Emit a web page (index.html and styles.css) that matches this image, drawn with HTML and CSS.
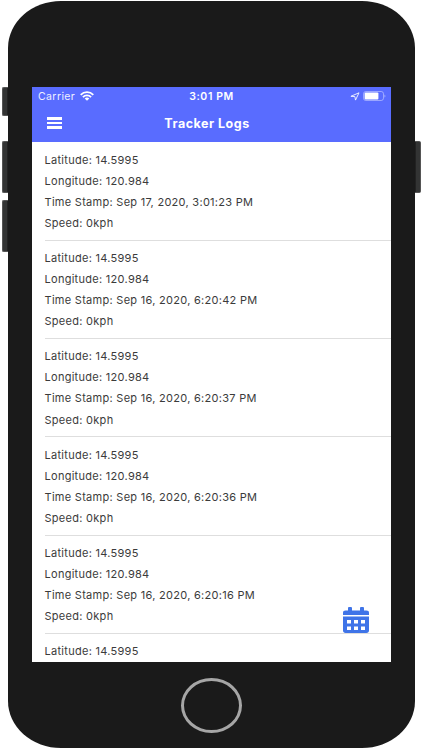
FILE: index.html
```html
<!DOCTYPE html>
<html lang="en">
<head>
    <meta charset="UTF-8">
    <meta name="viewport" content="width=device-width, initial-scale=1.0">
    <title>Tracker Logs</title>
    <link rel="stylesheet" href="styles.css">
</head>
<body>

    <div class="device">
        <div class="side side-left">
            <span class="key key-mute"></span>
            <span class="key"></span>
            <span class="key key-down"></span>
        </div>

        <div class="phone">
            <div class="screen">
                <header>
                    <div class="status-bar">
                        <div class="status-left">
                            <span class="carrier">Carrier</span>
                            <svg class="wifi" viewBox="0 0 14 10" fill="none" stroke="#fff" stroke-width="1.8">
                                <path d="M0.7 3.9C4.2 0.3 9.8 0.3 13.3 3.9"/>
                                <path d="M2.9 6.1C5.2 3.8 8.8 3.8 11.1 6.1"/>
                                <path d="M7 9.7L4.7 7.5C6 6.3 8 6.3 9.3 7.5Z" fill="#fff" stroke="none"/>
                            </svg>
                        </div>
                        <span class="clock">3:01 PM</span>
                        <div class="status-right">
                            <svg class="arrow" viewBox="0 0 10 9" fill="none" stroke="#fff" stroke-opacity="0.85" stroke-width="1" stroke-linejoin="round">
                                <path d="M9 0.8L0.9 4.3L4.9 4.6L5.5 8.1Z"/>
                            </svg>
                            <svg class="battery" viewBox="0 0 23 10">
                                <rect x="0.5" y="0.5" width="20" height="9" rx="2.3" fill="none" stroke="#fff" stroke-opacity="0.4"/>
                                <rect x="1.6" y="1.6" width="13.8" height="6.8" rx="1" fill="#fff"/>
                                <path d="M21.5 3.4C22.7 4 22.7 6 21.5 6.6Z" fill="#fff" fill-opacity="0.5"/>
                            </svg>
                        </div>
                    </div>
                    <div class="toolbar">
                        <button class="menu" aria-label="Menu">
                            <span></span>
                            <span></span>
                            <span></span>
                        </button>
                        <h1>Tracker Logs</h1>
                    </div>
                </header>

                <main>
                    <div class="log">
                        <p>Latitude: 14.5995</p>
                        <p>Longitude: 120.984</p>
                        <p>Time Stamp: Sep 17, 2020, 3:01:23 PM</p>
                        <p>Speed: 0kph</p>
                    </div>
                    <div class="log">
                        <p>Latitude: 14.5995</p>
                        <p>Longitude: 120.984</p>
                        <p>Time Stamp: Sep 16, 2020, 6:20:42 PM</p>
                        <p>Speed: 0kph</p>
                    </div>
                    <div class="log">
                        <p>Latitude: 14.5995</p>
                        <p>Longitude: 120.984</p>
                        <p>Time Stamp: Sep 16, 2020, 6:20:37 PM</p>
                        <p>Speed: 0kph</p>
                    </div>
                    <div class="log">
                        <p>Latitude: 14.5995</p>
                        <p>Longitude: 120.984</p>
                        <p>Time Stamp: Sep 16, 2020, 6:20:36 PM</p>
                        <p>Speed: 0kph</p>
                    </div>
                    <div class="log">
                        <p>Latitude: 14.5995</p>
                        <p>Longitude: 120.984</p>
                        <p>Time Stamp: Sep 16, 2020, 6:20:16 PM</p>
                        <p>Speed: 0kph</p>
                    </div>
                    <div class="log">
                        <p>Latitude: 14.5995</p>
                    </div>
                </main>

                <button class="calendar" aria-label="Pick a date">
                    <svg viewBox="0 0 26 26" fill="#3f74e8">
                        <path d="M0 8V5.8Q0 3.4 2.6 3.4H5V1Q5 0 6 0H8Q9 0 9 1V3.4H17V1Q17 0 18 0H20Q21 0 21 1V3.4H23.4Q26 3.4 26 5.8V8Z"/>
                        <path fill-rule="evenodd" d="M0 9.6H26V23.6Q26 26 23.4 26H2.6Q0 26 0 23.6ZM4 13V16.4H8V13ZM11 13V16.4H15V13ZM18 13V16.4H22V13ZM4 19.6V23H8V19.6ZM11 19.6V23H15V19.6ZM18 19.6V23H22V19.6Z"/>
                    </svg>
                </button>
            </div>

            <div class="home"></div>
        </div>

        <div class="side side-right">
            <span class="key"></span>
        </div>
    </div>

</body>
</html>
```
FILE: styles.css
```css
/* Basic styling for the page */
* {
    box-sizing: border-box;
}
body {
    margin: 0;
    background-color: #fff;
    color: #3b3b3b;
    font-family: Inter, "Liberation Sans", sans-serif;
}
button {
    padding: 0;
    border: none;
    background: none;
}

/* Phone body */
.device {
    display: flex;
    width: 422px;
    height: 750px;
    padding: 1px 1px 2px 2px;
    overflow: hidden;
}
.side {
    display: flex;
    flex-direction: column;
    width: 6px;
    flex-shrink: 0;
}
.side-left {
    padding-top: 86px;
}
.side-right {
    padding-top: 140px;
}
.key {
    height: 52px;
    background-color: #333434;
    border: 1px solid #555;
    border-right-color: #222;
    border-radius: 2px 0 0 2px;
}
.side-right .key {
    border-color: #555 #555 #555 #222;
    border-radius: 0 2px 2px 0;
}
.key-mute {
    height: 29px;
    margin-bottom: 25px;
}
.key-down {
    margin-top: 7px;
}
.phone {
    display: flex;
    flex-direction: column;
    align-items: center;
    width: 407px;
    padding-top: 86px;
    background-color: #1a1a1a;
    border-radius: 53px / 47px;
}
.screen {
    position: relative;
    width: 359px;
    height: 575px;
    background-color: #fff;
    overflow: hidden;
}
.home {
    width: 61px;
    height: 55px;
    margin-top: 16px;
    border: 3px solid #a6a6a6;
    border-radius: 50%;
}

/* Status bar and title */
header {
    height: 55px;
    background-color: #596cff;
    color: #fff;
}
.status-bar {
    display: grid;
    grid-template-columns: 1fr auto 1fr;
    align-items: center;
    height: 19px;
    padding: 0 6px;
    font-size: 10.5px;
    line-height: 19px;
}
.status-left,
.status-right {
    display: flex;
    align-items: center;
}
.status-right {
    justify-content: flex-end;
    padding-bottom: 1px;
}
.carrier {
    letter-spacing: 0.4px;
    opacity: 0.9;
}
.clock {
    font-weight: 600;
    letter-spacing: 0.6px;
}
.wifi {
    width: 14px;
    height: 10px;
    margin: 0 0 1px 5px;
}
.arrow {
    width: 10px;
    height: 9px;
    margin-right: 3px;
}
.battery {
    width: 23px;
    height: 10px;
    margin-right: -1px;
}
.toolbar {
    display: grid;
    grid-template-columns: 15px 1fr 15px;
    align-items: center;
    height: 34px;
    padding: 0 24px 0 15px;
}
.menu {
    display: flex;
    flex-direction: column;
    gap: 2px;
}
.menu span {
    width: 15px;
    height: 2.4px;
    background-color: #fff;
}
h1 {
    margin: 0;
    font-size: 12.5px;
    font-weight: 700;
    letter-spacing: 0.5px;
    text-align: center;
}

/* Log entries */
main {
    padding-left: 12.5px;
}
.log {
    height: 98.35px;
    padding-top: 7.2px;
    border-bottom: 1px solid #dedede;
}
.log:first-child {
    height: 98.7px;
    padding-top: 7.8px;
}
.log p {
    margin: 0;
    font-size: 11px;
    line-height: 21.1px;
    letter-spacing: 0.28px;
    white-space: nowrap;
}

/* Floating date button */
.calendar {
    position: absolute;
    right: 22.5px;
    bottom: 29.5px;
    width: 26px;
    height: 26px;
}
.calendar svg {
    display: block;
    width: 100%;
    height: 100%;
}
```
